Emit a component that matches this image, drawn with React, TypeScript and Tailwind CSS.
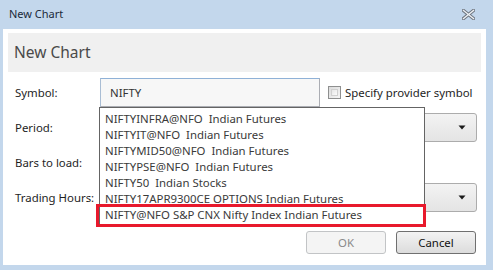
import React from "react";

const items = [
  "NIFTYINFRA@NFO  Indian Futures",
  "NIFTYIT@NFO  Indian Futures",
  "NIFTYMID50@NFO  Indian Futures",
  "NIFTYPSE@NFO  Indian Futures",
  "NIFTY50  Indian Stocks",
  "NIFTY17APR9300CE OPTIONS Indian Futures",
  "NIFTY@NFO S&P CNX Nifty Index Indian Futures",
];

function Arrow() {
  return (
    <svg width="8" height="5" viewBox="0 0 8 5">
      <path d="M0.5 0.5 L7.5 0.5 L4 4.5 Z" fill="#1a1a1a" />
    </svg>
  );
}

function Combo() {
  return (
    <div className="h-[29px] w-[377px] rounded-[3px] border border-[#acacac] bg-gradient-to-b from-[#f3f3f3] to-[#e4e4e4] flex items-center justify-end pr-[10px]">
      <Arrow />
    </div>
  );
}

export default function App() {
  return (
    <div
      className="w-[493px] h-[270px] bg-[#c3d7ec] flex flex-col overflow-hidden"
      style={{ fontFamily: '"Noto Sans", "Open Sans", sans-serif' }}
    >
      <div className="h-[29px] flex items-center justify-between pl-[9px] pr-[18px] shrink-0">
        <span className="text-[11px] text-[#1b2a3b]">New Chart</span>
        <svg width="13" height="11" viewBox="0 0 13 11">
          <path d="M1.5 1.5 L11.5 9.5 M11.5 1.5 L1.5 9.5" stroke="#6f7680" strokeWidth="3.4" strokeLinecap="square" />
          <path d="M1.5 1.5 L11.5 9.5 M11.5 1.5 L1.5 9.5" stroke="#eef1f4" strokeWidth="1.4" strokeLinecap="square" />
        </svg>
      </div>
      <div className="relative flex-1 bg-white ml-[3px] mr-[7px] mb-[5px] flex flex-col">
        <div className="mx-[5px] mt-[4px] h-[39px] bg-[#f0f0f0] flex items-center pl-[6px] text-[15.5px] text-[#4a4a4a]">
          New Chart
        </div>
        <div className="mt-[6px] flex flex-col gap-[6px] text-[11.4px] text-[#1e1e1e]">
          <div className="h-[29px] flex items-center">
            <div className="w-[97px] pl-[12px]">Symbol:</div>
            <div className="w-[220px] h-[29px] border border-[#abadb3] border-t-[#8fb1d7] border-l-[#a9bdd4] bg-[#f7f7f7] flex items-center pl-[9px] text-[#333]">
              NIFTY
            </div>
            <div className="ml-[8px] flex items-center gap-[4px]">
              <div className="w-[13px] h-[13px] border border-[#8e8f8f] bg-gradient-to-br from-[#dcdcdc] to-[#f5f5f5] p-[2px]">
                <div className="w-full h-full bg-gradient-to-br from-[#e6e6e6] to-[#fbfbfb] border border-[#d0d0d0]" />
              </div>
              <span>Specify provider symbol</span>
            </div>
          </div>
          <div className="h-[29px] flex items-center">
            <div className="w-[97px] pl-[12px]">Period:</div>
            <Combo />
          </div>
          <div className="h-[29px] flex items-center">
            <div className="w-[97px] pl-[12px]">Bars to load:</div>
          </div>
          <div className="h-[29px] flex items-center">
            <div className="w-[97px] pl-[12px]">Trading Hours:</div>
            <Combo />
          </div>
        </div>
        <div className="mt-[19px] flex justify-end gap-[10px] pr-[10px] text-[11.4px]">
          <div className="w-[80px] h-[23px] rounded-[3px] border border-[#c2c4c6] bg-[#f4f4f4] flex items-center justify-center text-[#8a8a8a]">
            OK
          </div>
          <div className="w-[80px] h-[23px] rounded-[3px] border border-[#707070] bg-gradient-to-b from-[#f3f3f3] to-[#dcdcdc] flex items-center justify-center text-[#111]">
            Cancel
          </div>
        </div>

        <div className="absolute left-[96px] top-[78px] w-[326px] border border-[#646464] bg-white pt-[3px] pb-[3px] text-[11.4px] text-[#3a3a3a]">
          {items.map((t) => (
            <div key={t} className="h-[16px] leading-[16px] pl-[5px] whitespace-pre">
              {t}
            </div>
          ))}
        </div>
        <div className="absolute left-[93px] top-[175px] w-[330px] h-[23px] border-[3px] border-[#e8192c]" />
      </div>
    </div>
  );
}
